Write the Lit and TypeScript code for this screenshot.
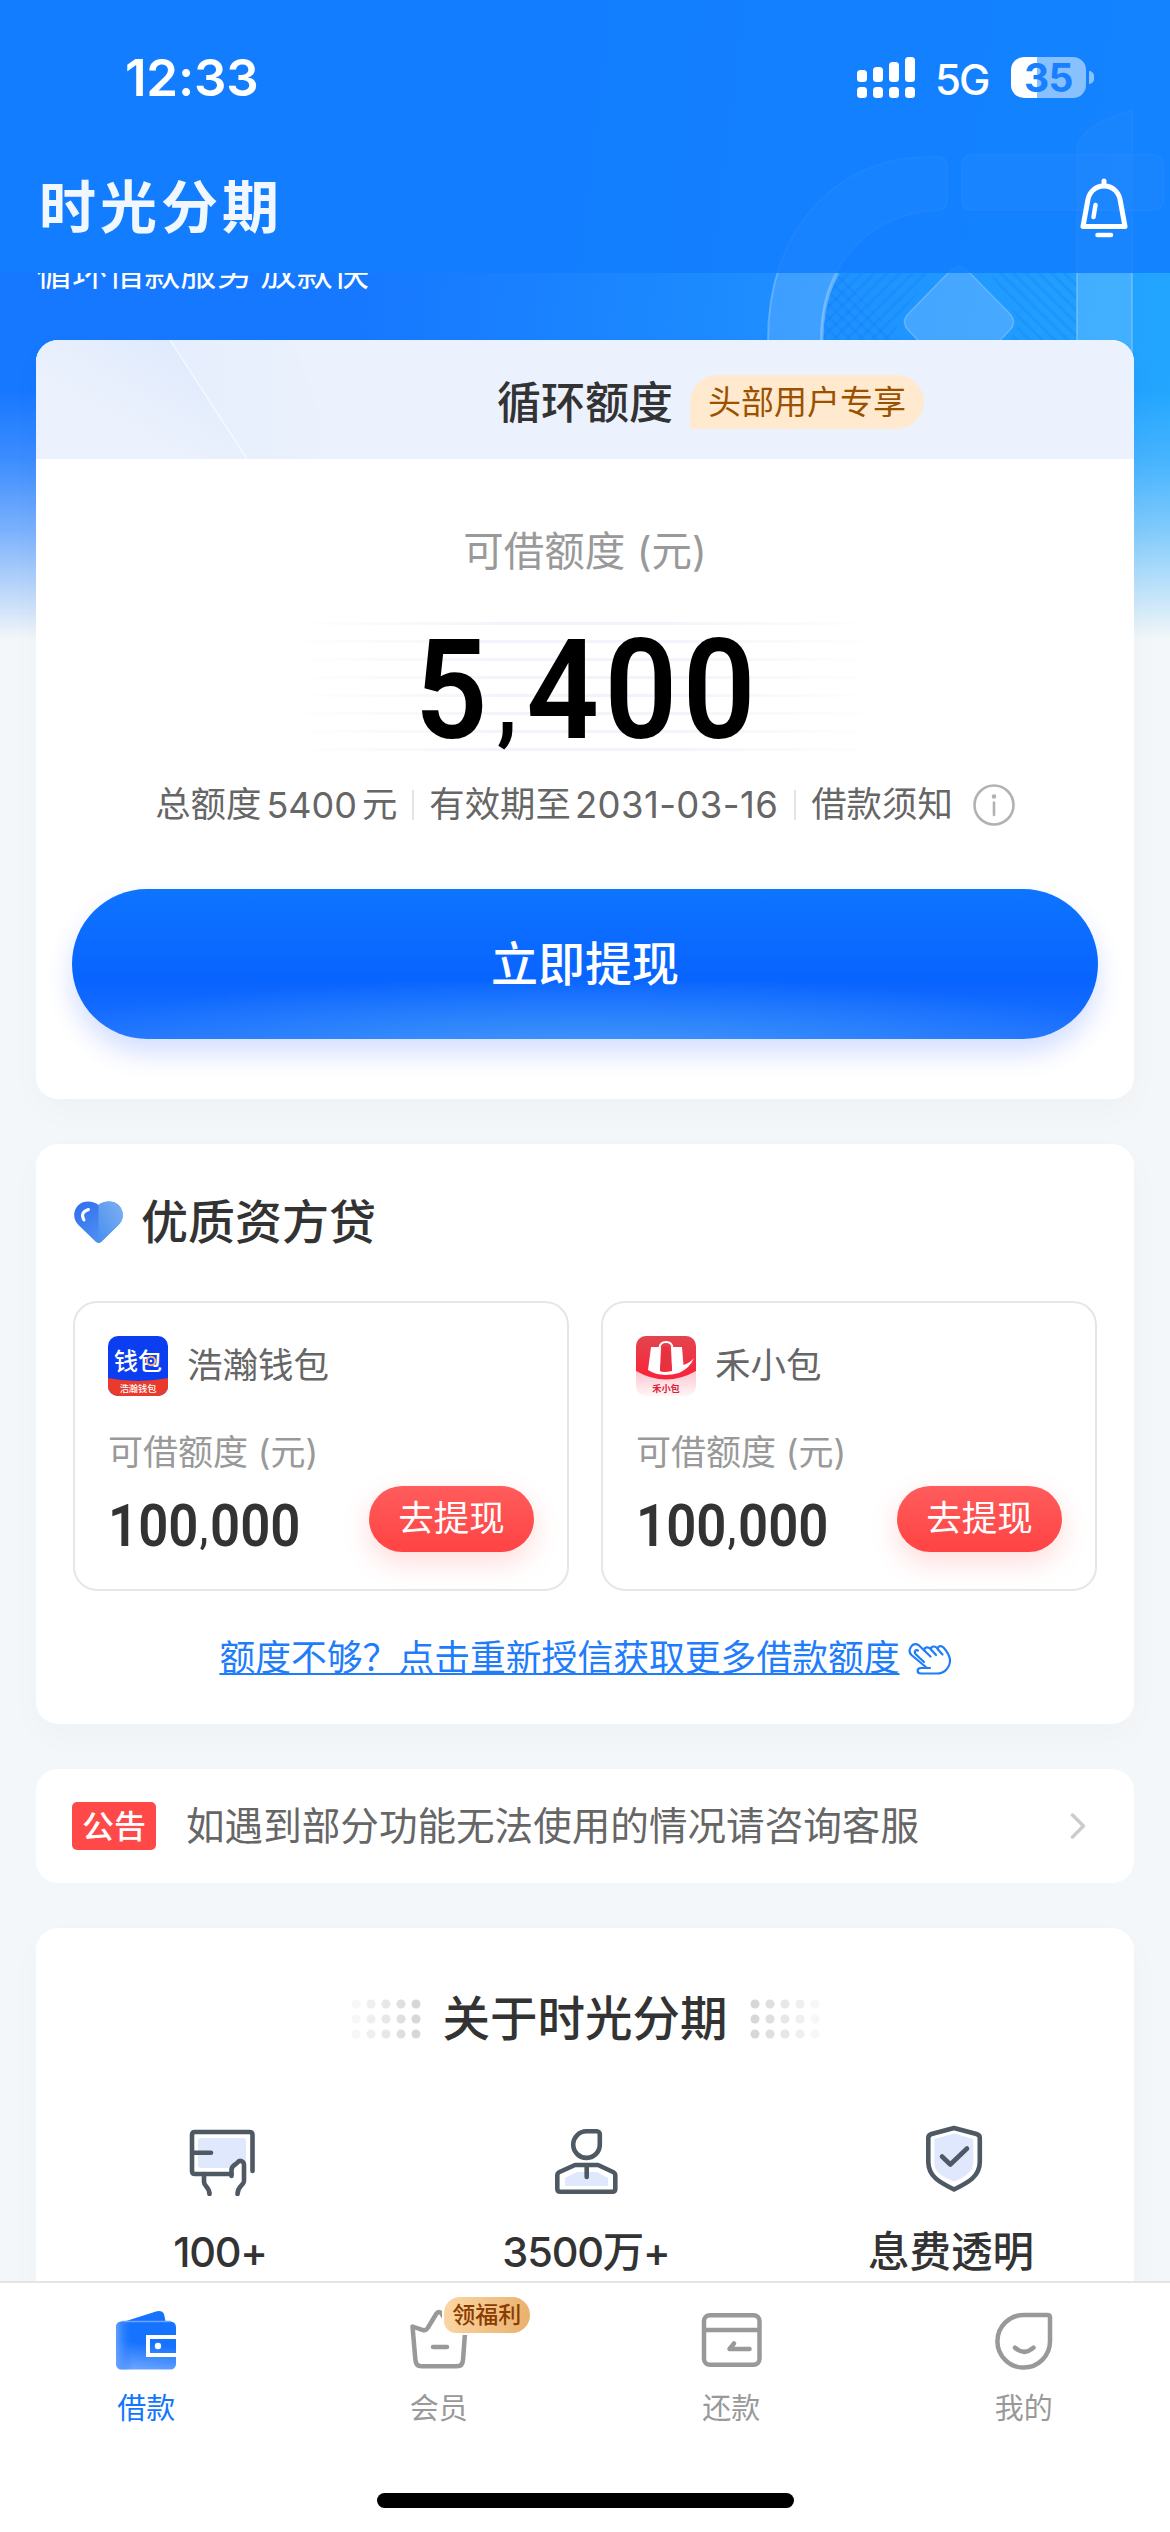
import { LitElement, html, svg, css, type TemplateResult } from "lit";
import { customElement, property } from "lit/decorators.js";

const FONT = css`Inter, "Noto Sans CJK SC", "Liberation Sans", sans-serif`;

/* ---------- status bar and navigation ---------- */

@customElement("app-header")
class AppHeader extends LitElement {
  static styles = css`
    :host { display: block; height: 273px; background: rgba(18, 126, 255, 0.86); color: #fff; font-family: ${FONT}; }
    .status { height: 155px; display: flex; align-items: center; justify-content: space-between; padding: 0 76px 0 125px; }
    .time { font-size: 51px; font-weight: 600; line-height: 60px; letter-spacing: -0.2px; padding-top: 1px; }
    .right { display: flex; align-items: center; }
    .net { margin-left: 19px; width: 57px; font-size: 42px; font-weight: 500; line-height: 50px; letter-spacing: -2px; padding-top: 4px; }
    .battery { display: flex; align-items: center; margin-left: 19px; }
    .cell { width: 75px; height: 41px; border-radius: 13px; display: flex; align-items: center; justify-content: center;
      background: linear-gradient(90deg, #fff 0 26px, rgba(255, 255, 255, 0.5) 26px); color: #1680ff;
      font-size: 39px; font-weight: 700; letter-spacing: -0.5px; line-height: 41px; }
    .nub { width: 5px; height: 13px; margin-left: 3px; border-radius: 0 6px 6px 0; background: rgba(255, 255, 255, 0.5); }
    .nav { height: 106px; display: flex; align-items: center; justify-content: space-between; padding: 0 36px 0 39px; }
    .brand { font-size: 57px; font-weight: 700; letter-spacing: 4px; line-height: 70px; color: #f1f7ff; }
    svg { display: block; }
  `;

  render() {
    const bars = [[0, 13, 12], [16, 10, 15], [32, 5, 20], [48, 0, 25]];
    return html`
      <div class="status">
        <span class="time">12:33</span>
        <div class="right">
          <svg width="59" height="41" viewBox="0 0 59 41" fill="#fff">
            ${bars.map(([x, y, h]) => svg`
              <rect x=${x} y=${y} width="10" height=${h} rx="3.5"/>
              <rect x=${x} y="30" width="10" height="11" rx="3.5"/>`)}
          </svg>
          <span class="net">5G</span>
          <div class="battery"><div class="cell">35</div><div class="nub"></div></div>
        </div>
      </div>
      <div class="nav">
        <span class="brand">时光分期</span>
        <svg width="60" height="66" viewBox="0 0 60 66" fill="none" stroke="#fff" stroke-width="5" stroke-linecap="round" stroke-linejoin="round">
          <path d="M30 6V11C20.5 11 14.5 18 13.5 27L9 51.5H51L46.5 27C45.5 18 39.5 11 30 11"/>
          <path d="M21.5 30L19.5 42" stroke-width="4.5"/>
          <path d="M23.5 60H37" stroke-width="4.5"/>
        </svg>
      </div>`;
  }
}

/* ---------- hero artwork behind the first card ---------- */

@customElement("hero-art")
class HeroArt extends LitElement {
  static styles = css`
    :host { display: block; height: 640px;
      background: linear-gradient(97deg, #1677ff 30%, #1e90ff 68%, #22a6ff 98%);
      -webkit-mask-image: linear-gradient(180deg, #000 390px, rgba(0,0,0,.82) 463px, rgba(0,0,0,.55) 530px, rgba(0,0,0,.22) 597px, transparent 640px);
      mask-image: linear-gradient(180deg, #000 390px, rgba(0,0,0,.82) 463px, rgba(0,0,0,.55) 530px, rgba(0,0,0,.22) 597px, transparent 640px); }
    svg { display: block; }
  `;

  render() {
    return html`
      <svg width="1170" height="400" viewBox="0 0 1170 400">
        <defs>
          <pattern id="hatchL" width="9" height="9" patternUnits="userSpaceOnUse" patternTransform="rotate(-45)">
            <rect width="3" height="9" fill="#0c74ef" fill-opacity=".22"/>
          </pattern>
          <pattern id="hatchR" width="9" height="9" patternUnits="userSpaceOnUse" patternTransform="rotate(45)">
            <rect width="3" height="9" fill="#0c74ef" fill-opacity=".22"/>
          </pattern>
        </defs>
        <path d="M937 210C870 213 821 262 821 340V360H900L896 322L976 212Z" fill="url(#hatchR)"/>
        <path d="M837 273L900 340V400H821V340C821 312 827 290 837 273ZM990 273H1076V380H990L1020 322Z" fill="url(#hatchL)"/>
        <g fill="#fff" fill-opacity=".15" stroke="#8cc8ff" stroke-opacity=".5" stroke-width="2">
          <path d="M925 157H937Q947 157 947 167V200Q947 209 938 210C870 214 821 262 821 340V400H768V340C768 230 835 159 925 157Z"/>
          <rect x="962" y="155" width="201" height="55" rx="9"/>
          <path d="M1077 400V147Q1082 125 1132 110V400Z"/>
        </g>
        <path d="M838 273C827 292 822 315 822 340" fill="none" stroke="#9fd0ff" stroke-opacity=".5" stroke-width="3"/>
        <path d="M950 271Q959 262 968 271L1009 313Q1018 322 1009 331L968 373Q959 382 950 373L909 331Q900 322 909 313Z" fill="#6cb6ff" fill-opacity=".5" stroke="#a8d8ff" stroke-opacity=".4" stroke-width="1.5"/>
      </svg>`;
  }
}

/* ---------- credit card ---------- */

@customElement("credit-card")
class CreditCard extends LitElement {
  static styles = css`
    :host { display: block; background: #fff; border-radius: 22px; overflow: hidden; font-family: ${FONT};
      box-shadow: 0 12px 36px rgba(0, 0, 0, 0.025); }
    .top { position: relative; height: 119px; display: flex; align-items: center; justify-content: center; background: #ecf2fd; }
    .deco { position: absolute; left: 0; top: 0; }
    h2 { position: relative; margin: 0; font-size: 44px; font-weight: 500; line-height: 60px; color: #333; padding-top: 6px; }
    .tag { position: absolute; left: 193px; top: 8px; width: 234px; height: 54px; border-radius: 27px 27px 27px 4px;
      background: #ffe9cf; color: #9a5200; font-size: 33px; font-weight: 400; line-height: 54px; text-align: center; white-space: nowrap; }
    .body { display: flex; flex-direction: column; align-items: center; padding: 63px 36px 60px; }
    .label { font-size: 40.5px; line-height: 60px; color: #999; }
    .amount { margin-top: 40px; width: 590px; height: 130px; display: flex; justify-content: center; align-items: center;
      background:
        linear-gradient(90deg, #fff 0%, rgba(255,255,255,0) 40%, rgba(255,255,255,0) 60%, #fff 100%),
        repeating-linear-gradient(180deg, #f2f3fb 0 3px, #fff 3px 18px); }
    .figure { font-family: Roboto, "Liberation Sans", sans-serif; font-size: 140px; font-weight: 600; line-height: 130px;
      letter-spacing: 6px; color: #000; transform: scaleX(0.91); padding: 6px 0 0 6px; white-space: nowrap; }
    .comma { display: inline-block; font-size: 96px; line-height: 1; padding: 0 4px 0 4px; transform: translateY(-5px); }
    .info { margin-top: 28px; height: 50px; display: flex; align-items: center; font-size: 35.4px; line-height: 50px; color: #666; white-space: nowrap; }
    .info i { width: 2px; height: 30px; background: #e4e4e4; margin: 0 15px; }
    .info svg { margin-left: 20px; display: block; }
    .num { font-size: 36px; letter-spacing: 0; margin: 0 5px; }
    .date { font-size: 36.5px; letter-spacing: 0.4px; margin: 0 1px 0 4px; }
    .cta { margin-top: 59px; width: 1026px; height: 150px; border-radius: 75px; border: 0; padding: 0; font-family: inherit;
      color: #fff; font-size: 47px; font-weight: 500; line-height: 60px;
      background:
        radial-gradient(ellipse 600px 70px at 50% 106%, rgba(76, 164, 248, 0.75), rgba(72, 150, 250, 0) 100%),
        linear-gradient(180deg, #0e74ff 0%, #0864ff 60%, #1c6fff 100%);
      box-shadow: 0 14px 26px rgba(40, 90, 255, 0.2); }
  `;

  render() {
    return html`
      <div class="top">
        <svg class="deco" width="400" height="119" viewBox="0 0 400 119">
          <defs>
            <linearGradient id="a" x1="0" y1="1" x2="1" y2="0"><stop offset=".3" stop-color="#dfeafd" stop-opacity="0"/><stop offset="1" stop-color="#d9e6fd"/></linearGradient>
            <linearGradient id="b" x1="0" y1="0" x2="1" y2="0"><stop offset="0" stop-color="#deeafd"/><stop offset="1" stop-color="#e6effd" stop-opacity=".4"/></linearGradient>
          </defs>
          <path d="M0 0H134L211 119H0Z" fill="url(#a)"/>
          <path d="M134 0H258L300 119H211Z" fill="url(#b)" opacity=".5"/>
          <path d="M134 0L211 119" stroke="#fff" stroke-opacity=".6" stroke-width="1.5"/>
        </svg>
        <h2>循环额度<span class="tag">头部用户专享</span></h2>
      </div>
      <div class="body">
        <div class="label">可借额度 (元)</div>
        <div class="amount"><span class="figure">5<span class="comma">,</span>400</span></div>
        <div class="info">
          <span>总额度</span><span class="num">5400</span><span>元</span><i></i>
          <span>有效期至</span><span class="date">2031-03-16</span><i></i>
          <span>借款须知</span>
          <svg width="42" height="42" viewBox="0 0 42 42" fill="none" stroke="#b2b2b2" stroke-width="2.6" stroke-linecap="round">
            <circle cx="21" cy="21" r="19.5"/><path d="M21 18.5V31"/><circle cx="21" cy="12.5" r="1" fill="#b2b2b2"/>
          </svg>
        </div>
        <button class="cta">立即提现</button>
      </div>`;
  }
}

/* ---------- partner lenders ---------- */

const walletLogo = html`
  <svg width="60" height="60" viewBox="0 0 60 60" font-family="Noto Sans CJK SC, sans-serif" text-anchor="middle" fill="#fff">
    <clipPath id="w"><rect width="60" height="60" rx="10"/></clipPath>
    <g clip-path="url(#w)">
      <rect width="60" height="60" fill="#0b3ef0"/>
      <path d="M0 42Q30 48 60 42V60H0Z" fill="#e93a2c"/>
      <text x="30" y="34" font-size="24" font-weight="500">钱包</text>
      <circle cx="43" cy="25" r="4.2" fill="#0b3ef0" stroke="#f3b08a" stroke-width="2"/>
      <circle cx="43" cy="25" r="1.3" fill="#fff"/>
      <text x="30" y="56" font-size="9.2" font-weight="500">浩瀚钱包</text>
    </g>
  </svg>`;

const bagLogo = html`
  <svg width="60" height="60" viewBox="0 0 60 60">
    <defs>
      <linearGradient id="r" x1="0" y1="0" x2="0" y2="1"><stop offset="0" stop-color="#e2454f"/><stop offset="1" stop-color="#fb2238"/></linearGradient>
      <linearGradient id="p" x1="0" y1="0" x2="0" y2="1"><stop offset=".6" stop-color="#fbc9d2"/><stop offset="1" stop-color="#fff5f6"/></linearGradient>
      <clipPath id="c"><rect width="60" height="60" rx="10"/></clipPath>
    </defs>
    <g clip-path="url(#c)">
      <rect width="60" height="60" fill="url(#p)"/>
      <path d="M0 0H60V35Q30 52 0 35Z" fill="url(#r)"/>
      <path d="M15 11H25L24 35Q27 37 36 35L35 11H46L47.5 29Q54 27 58 22Q54 32 43 37Q24 42 12 34Z" fill="#fff"/>
      <path d="M23.5 12Q24 6 30 6T36.5 12" fill="none" stroke="#fff" stroke-width="2"/>
      <path d="M27 11H33L36 34H24Z" fill="#e9303f"/>
      <text x="30" y="56" font-size="9.2" font-weight="700" fill="#d8243a" text-anchor="middle" font-family="Noto Sans CJK SC, sans-serif">禾小包</text>
    </g>
  </svg>`;

@customElement("lender-card")
class LenderCard extends LitElement {
  @property() name = "";
  @property() amount = "";
  @property({ attribute: false }) logo?: TemplateResult;

  static styles = css`
    :host { display: block; box-sizing: border-box; height: 290px; border: 2px solid #e6e6e6; border-radius: 24px; padding: 33px 33px 0; }
    .head { display: flex; align-items: center; gap: 19px; height: 60px; font-size: 35.5px; line-height: 62px; color: #666; }
    .head svg { display: block; }
    .label { margin-top: 36px; font-size: 35px; line-height: 40px; color: #999; }
    .row { margin-top: 14px; height: 66px; display: flex; justify-content: space-between; }
    .amount { font-family: Roboto, "Liberation Sans", sans-serif; font-size: 60px; font-weight: 600; line-height: 66px; color: #333;
      padding-top: 7px; letter-spacing: 0; transform: scaleX(0.88); transform-origin: 0 50%; white-space: nowrap; }
    .comma { display: inline-block; font-size: 43px; line-height: 1; padding: 0 2px 0 1px; transform: translateY(-3px); }
    button { width: 165px; height: 66px; border: 0; padding: 0; border-radius: 33px; color: #fff; font-family: inherit; font-size: 35.5px; line-height: 50px;
      background: linear-gradient(180deg, #ff5c5c, #ff4343); box-shadow: 0 10px 28px rgba(255, 68, 68, 0.2); }
  `;

  render() {
    const [thousands, rest] = this.amount.split(",");
    return html`
      <div class="head">${this.logo}<span>${this.name}</span></div>
      <div class="label">可借额度 (元)</div>
      <div class="row"><span class="amount">${thousands}<span class="comma">,</span>${rest}</span><button>去提现</button></div>`;
  }
}

@customElement("lender-section")
class LenderSection extends LitElement {
  static styles = css`
    :host { display: block; background: #fff; border-radius: 22px; padding: 48px 37px 41px; font-family: ${FONT};
      box-shadow: 0 12px 36px rgba(0, 0, 0, 0.025); }
    .title { display: flex; align-items: center; gap: 18px; height: 60px; line-height: 60px; padding-left: 1px; font-size: 47px; font-weight: 500; color: #333; }
    .title svg, .link svg { display: block; }
    .grid { display: grid; grid-template-columns: 496px 496px; justify-content: space-between; margin-top: 49px; }
    .link { margin-top: 42px; height: 50px; line-height: 50px; display: flex; align-items: center; justify-content: center; gap: 8px; color: #1f7dfb;
      font-size: 35.8px; white-space: nowrap; }
    .link span { text-decoration: underline; text-decoration-thickness: 2px; text-underline-offset: 2px; text-decoration-skip-ink: none; }
  `;

  render() {
    return html`
      <div class="title">
        <svg width="49" height="42" viewBox="0 0 49 42">
          <defs>
            <linearGradient id="h1" x1="0" y1="0" x2="1" y2="1"><stop offset="0" stop-color="#2f6cf0"/><stop offset="1" stop-color="#5a9df2"/></linearGradient>
            <linearGradient id="h2" x1="1" y1="0" x2="0" y2="1"><stop offset="0" stop-color="#7fb0f2"/><stop offset="1" stop-color="#4690ee"/></linearGradient>
          </defs>
          <path d="M24.5 4C20 0 10 -1.5 4.5 4C-1.5 10 -1 18.5 4.5 24L22 41Q24.5 43 27 41L44.5 24C50 18.5 50.5 10 44.5 4C39 -1.5 29 0 24.5 4Z" fill="url(#h1)"/>
          <path d="M24.5 4C29 0 39 -1.5 44.5 4C50.5 10 50 18.5 44.5 24L27 41Q25.7 42 24.5 42Z" fill="url(#h2)"/>
          <path d="M14.5 8.5Q5.5 11.5 10 19" fill="none" stroke="#fff" stroke-width="3" stroke-linecap="round"/>
        </svg>
        <span>优质资方贷</span>
      </div>
      <div class="grid">
        <lender-card name="浩瀚钱包" amount="100,000" .logo=${walletLogo}></lender-card>
        <lender-card name="禾小包" amount="100,000" .logo=${bagLogo}></lender-card>
      </div>
      <div class="link">
        <span>额度不够？点击重新授信获取更多借款额度</span>
        <svg width="43" height="33" viewBox="0 0 43 33" fill="none" stroke="#1f7dfb" stroke-width="2.2" stroke-linecap="round" stroke-linejoin="round">
          <path d="M22 26H13C8.5 26 8.5 31.5 13 31.5H29C37 31.5 42 25 42 18.5C42 13 39 9.5 35.5 5.5C33 3 29 4 30 7.5C28 3.5 22.5 3.5 23 7.5C21 4.5 15.5 4.5 16.5 8.5"/>
          <path d="M19 26L3.5 13C-1 8.5 4 -0.5 10.5 3L22.5 14.5"/>
          <path d="M16 20L8 12.5C5.5 10 7.5 7 10 8.5"/>
          <path d="M23 7.5L28 13M30 7.5L34.5 12.5"/>
        </svg>
      </div>`;
  }
}

/* ---------- notice ---------- */

@customElement("notice-bar")
class NoticeBar extends LitElement {
  static styles = css`
    :host { display: flex; align-items: center; height: 114px; box-sizing: border-box; padding: 0 48px 0 36px; background: #fff; border-radius: 22px; font-family: ${FONT}; }
    .badge { width: 84px; height: 48px; line-height: 49px; border-radius: 5px; background: #ff4848; color: #fff; text-align: center; font-size: 32px; font-weight: 500; }
    .text { flex: 1; margin-left: 30px; font-size: 38.6px; color: #666; line-height: 50px; }
    svg { display: block; }
  `;

  render() {
    return html`
      <span class="badge">公告</span>
      <span class="text">如遇到部分功能无法使用的情况请咨询客服</span>
      <svg width="16" height="26" viewBox="0 0 16 26" fill="none" stroke="#ccc" stroke-width="3.5" stroke-linecap="round" stroke-linejoin="round"><path d="M2.5 2L13.5 13L2.5 24"/></svg>`;
  }
}

/* ---------- about ---------- */

const cardIcon = svg`
  <rect x="19" y="14" width="48" height="30" rx="3" fill="#e0e8fe" stroke="none"/>
  <path d="M65 44V41Q65 37 61 37Q57 37 52.5 43V50H46L60 54Z" fill="#fff" stroke="none"/>
  <path d="M73.5 47V11Q73.5 8 70.5 8H16Q13 8 13 11V47Q13 50 16 50H52.5M13 28.7H32"/>
  <path d="M52.5 52V46C52.5 41 57.5 40.5 58.5 38.5C60.5 35.5 65 37 65 41V57C65 61.5 58.5 62 58.5 70"/>
  <path d="M25 50V58C25 62.5 30.5 63 30.5 70"/>`;
const personIcon = svg`
  <path d="M20 54L32 48H52L63 54V62H20Z" fill="#e0e8fe" stroke="none"/>
  <path d="M41.5 7.3H51.8A3 3 0 0 1 54.8 10.3V20A13.3 13.3 0 1 1 41.5 7.3Z"/>
  <path d="M30 41H53L68 48Q70.3 49 70.3 51.5V64.7Q70.3 67.7 67.3 67.7H15.3Q12.3 67.7 12.3 64.7V51.5Q12.3 49 14.5 48ZM41.7 42V53"/>`;
const shieldIcon = svg`
  <path d="M43 9.5L62.3 15V38C62.3 48 54 53 43 57.5C31 53 23.3 48 23.3 38V15Z" fill="#e0e8fe" stroke="none"/>
  <path d="M43 4L65.5 10Q68.8 11 68.8 14V38C68.8 53 56 59 43 65.5C30 59 17.3 53 17.3 38V14Q17.3 11 20.5 10Z"/>
  <path d="M31 32.5L39.3 40.5L56 24.5"/>`;

@customElement("about-section")
class AboutSection extends LitElement {
  static styles = css`
    :host { display: block; height: 500px; box-sizing: border-box; padding-top: 61px; background: #fff; border-radius: 22px; font-family: ${FONT};
      box-shadow: 0 12px 36px rgba(0, 0, 0, 0.025); }
    .title { height: 60px; line-height: 60px; display: flex; align-items: center; justify-content: center; gap: 22px; font-size: 47.5px; font-weight: 500; color: #333; }
    .title svg, .item svg { display: block; }
    .flip { transform: scaleX(-1); }
    .grid { display: grid; grid-template-columns: repeat(3, 1fr); margin-top: 75px; }
    .item { display: flex; flex-direction: column; align-items: center; gap: 31px; font-size: 41.5px; font-weight: 500; line-height: 51px; color: #333; }
    .figure { letter-spacing: -1.2px; padding-left: 2px; }
  `;

  private dots(cls: string) {
    return html`
      <svg class=${cls} width="70" height="40" viewBox="0 0 70 40" fill="#ccc">
        ${[0, 1, 2, 3, 4].map((c) => [0, 1, 2].map((r) => svg`
          <circle cx=${5 + c * 15} cy=${5 + r * 15} r="4.5" opacity=${0.15 + c * 0.16}/>`))}
      </svg>`;
  }

  render() {
    const items: [TemplateResult<2>, string, string][] = [
      [cardIcon, "100+", "figure"], [personIcon, "3500万+", "figure"], [shieldIcon, "息费透明", ""],
    ];
    return html`
      <div class="title">${this.dots("")}<span>关于时光分期</span>${this.dots("flip")}</div>
      <div class="grid">
        ${items.map(([icon, text, cls]) => html`
          <div class="item">
            <svg width="80" height="72" viewBox="0 0 80 72" fill="none" stroke="#4e5963" stroke-width="4.6" stroke-linecap="round" stroke-linejoin="round">${icon}</svg>
            <span class=${cls}>${text}</span>
          </div>`)}
      </div>`;
  }
}

/* ---------- tab bar ---------- */

const walletTab = svg`
  <defs>
    <linearGradient id="t" x1=".5" y1="0" x2=".35" y2="1"><stop offset=".45" stop-color="#1673ff"/><stop offset="1" stop-color="#6ba4ff"/></linearGradient>
    <linearGradient id="l" x1="0" y1="0" x2="1" y2="0"><stop offset="0" stop-color="#6ba4ff" stop-opacity=".9"/><stop offset=".28" stop-color="#1673ff" stop-opacity="0"/></linearGradient>
  </defs>
  <path d="M13 18L46 7.5Q52 6 54 10L55.7 18Z" fill="#1673ff" stroke="none"/>
  <rect x="6" y="17.5" width="60" height="48" rx="5.5" fill="url(#t)" stroke="none"/>
  <rect x="6" y="17.5" width="60" height="48" rx="5.5" fill="url(#l)" stroke="none"/>
  <path d="M13 17.5H60" stroke="#6ba4ff" stroke-width="1.5"/>
  <path d="M66 33H38V51H66" stroke="#fff" stroke-width="4" stroke-linecap="butt" stroke-linejoin="miter"/>
  <circle cx="48" cy="42" r="3.2" fill="#fff" stroke="none"/>`;
const memberTab = svg`
  <path d="M9.5 22.5L20 26.2Q23 27 25 23.5L33.5 9.5Q36 6.5 38.5 9.5L47 23.5Q49 27 52 26.2L62.5 22.5L60 56Q59.5 62.3 54 62.3H18.5Q13 62.3 12.4 56ZM30 43H44"/>`;
const repayTab = svg`
  <rect x="9" y="11.2" width="55.5" height="49.6" rx="6"/>
  <path d="M9 26H64.5" stroke-linecap="butt"/>
  <path d="M39 39.5L34.5 44.9H54.5"/>`;
const mineTab = svg`
  <path d="M35.7 11H59.5Q62 11 62 13.5V37.3A26.3 26.3 0 1 1 35.7 11ZM27 43.7Q36.3 52 45.5 43.7"/>`;

@customElement("tab-bar")
class TabBar extends LitElement {
  static styles = css`
    :host { display: block; height: 251px; box-sizing: border-box; border-top: 2px solid #e3e4e5; background: #fff; font-family: ${FONT}; }
    .tabs { display: grid; grid-template-columns: repeat(4, 1fr); padding-top: 21px; }
    .tab { display: flex; flex-direction: column; align-items: center; gap: 14px; font-size: 29px; line-height: 37px; color: #999; }
    .active { color: #1277ff; }
    .icon { position: relative; width: 72px; height: 72px; }
    svg { display: block; }
    .badge { position: absolute; left: 39px; top: -9px; width: 86px; height: 36px; border: 2px solid #fff; border-radius: 18px 20px 20px 14px;
      background: linear-gradient(100deg, #fbd7a6, #e9b06a); color: #8a3c00; font-size: 23px; font-weight: 500; line-height: 36px; text-align: center; }
    .home { width: 417px; height: 15px; border-radius: 8px; background: #000; margin: 66px auto 0; }
  `;

  render() {
    const tabs: [TemplateResult<2>, string, string][] = [
      [walletTab, "借款", ""], [memberTab, "会员", "领福利"], [repayTab, "还款", ""], [mineTab, "我的", ""],
    ];
    return html`
      <div class="tabs">
        ${tabs.map(([icon, text, badge], i) => html`
          <div class="tab ${i === 0 ? "active" : ""}">
            <div class="icon">
              <svg width="72" height="72" viewBox="0 0 72 72" fill="none" stroke="#999" stroke-width="4.5" stroke-linecap="round" stroke-linejoin="round">${icon}</svg>
              ${badge ? html`<span class="badge">${badge}</span>` : ""}
            </div>
            <span>${text}</span>
          </div>`)}
      </div>
      <div class="home"></div>`;
  }
}

/* ---------- page ---------- */

@customElement("app-root")
class AppRoot extends LitElement {
  static styles = css`
    :host { display: block; width: 1170px; height: 2532px; }
    .screen { position: relative; width: 1170px; height: 2532px; overflow: hidden; display: flex; flex-direction: column; background: #f4f7f9; }
    hero-art { position: absolute; left: 0; top: 0; width: 1170px; }
    app-header { position: absolute; left: 0; top: 0; width: 1170px; z-index: 2; }
    .scroll { position: relative; flex: 1; min-height: 0; overflow: hidden; display: flex; flex-direction: column; gap: 45px; padding: 273px 36px 0; }
    .scroll > * { flex-shrink: 0; }
    /* The slogan is scrolled half way under the header. */
    .slogan { height: 22px; overflow: hidden; display: flex; align-items: flex-end; color: #fff;
      font-family: ${FONT}; font-size: 36.1px; line-height: 43px; word-spacing: -2px; }
    tab-bar { flex: none; position: relative; }
  `;

  render() {
    return html`
      <div class="screen">
        <hero-art></hero-art>
        <app-header></app-header>
        <div class="scroll">
          <div class="slogan"><span>循环借款服务 放款快</span></div>
          <credit-card></credit-card>
          <lender-section></lender-section>
          <notice-bar></notice-bar>
          <about-section></about-section>
        </div>
        <tab-bar></tab-bar>
      </div>`;
  }
}
